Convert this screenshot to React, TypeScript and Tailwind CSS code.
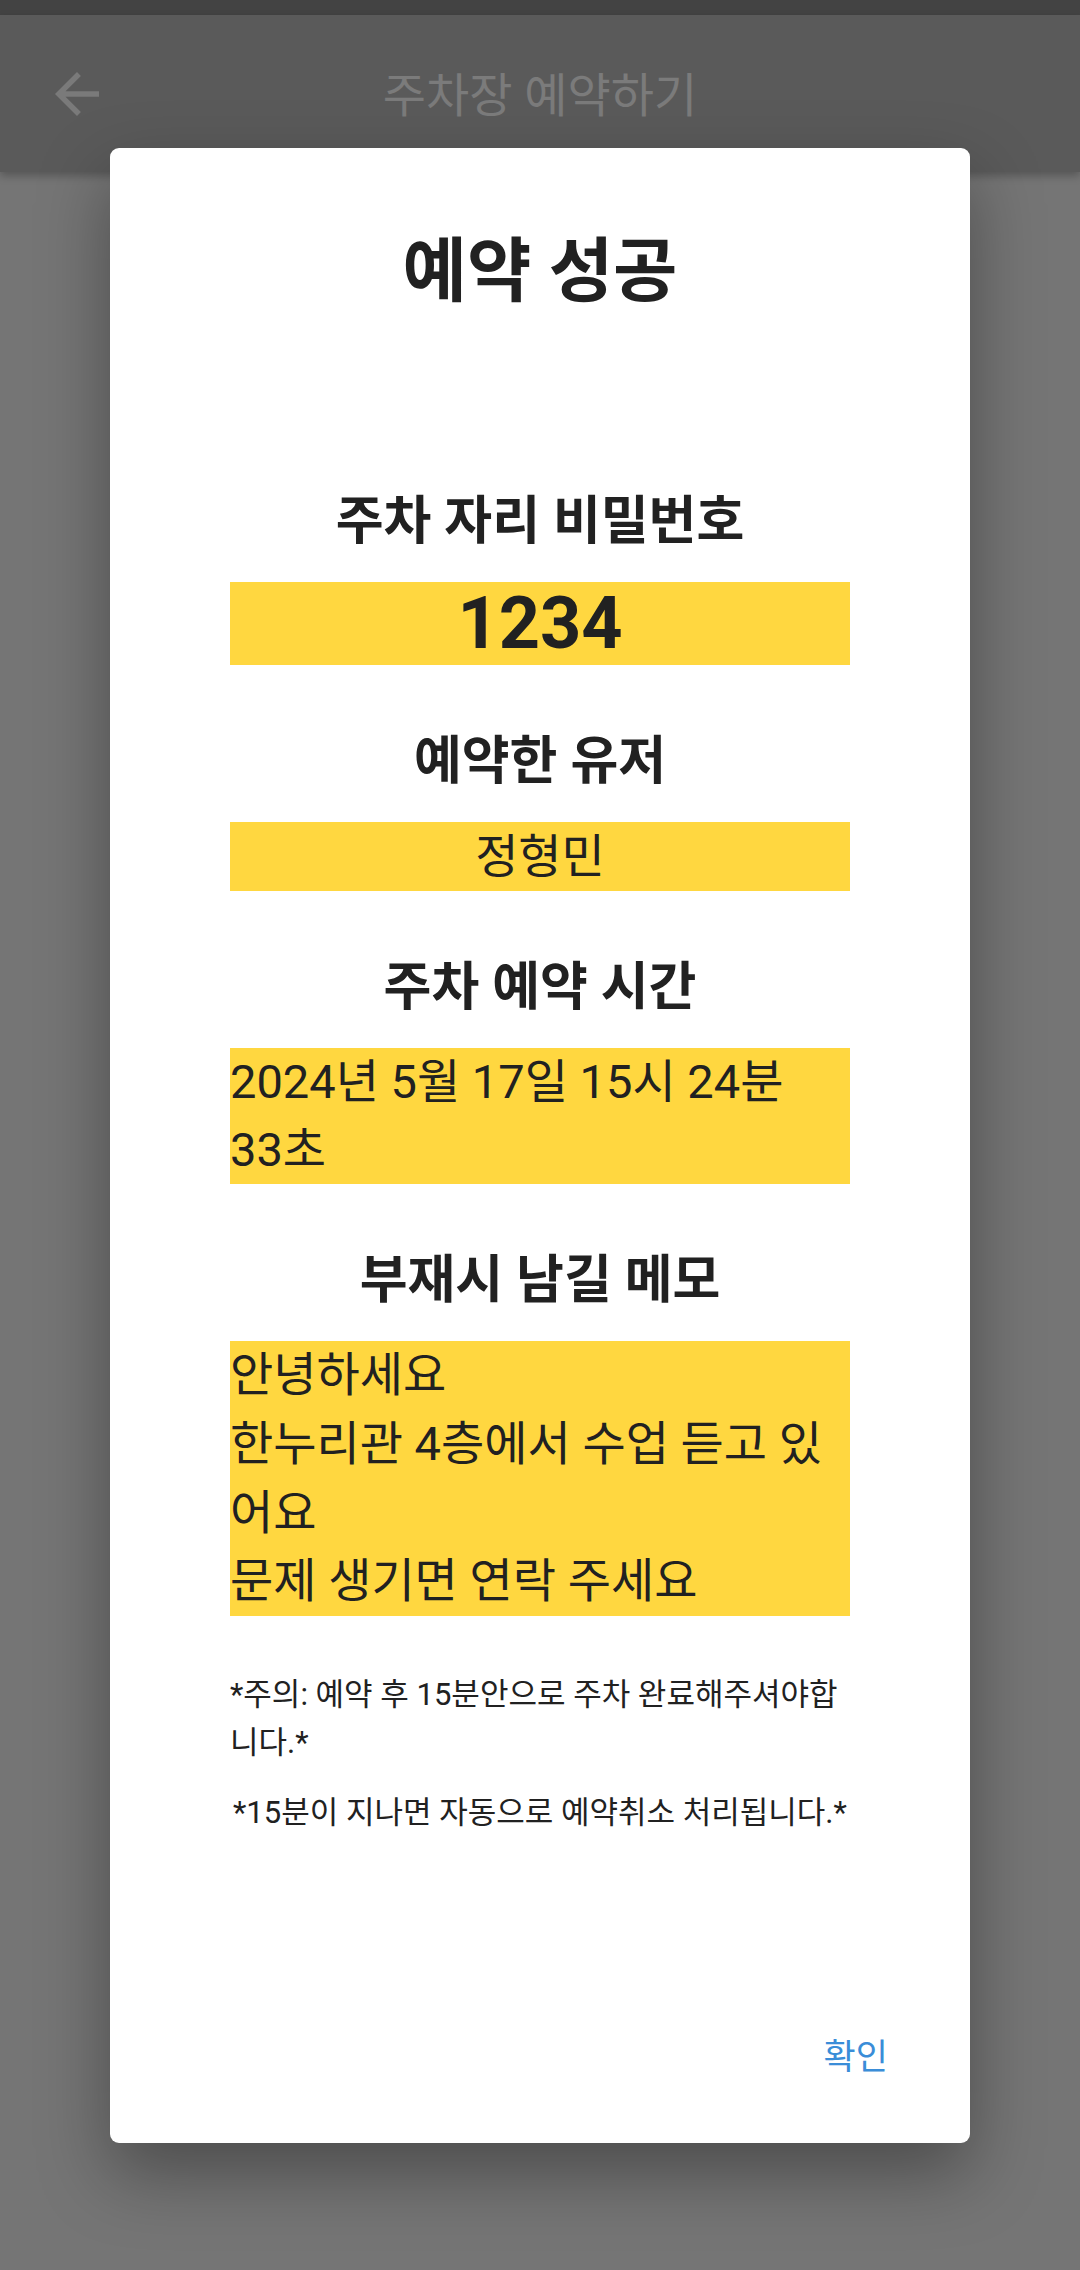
import React from "react";

const FONT = "font-[family-name:Roboto,'Noto_Sans_CJK_KR',sans-serif]";

function Heading({ children, mt }: { children: React.ReactNode; mt: string }) {
  return (
    <div className={`${mt} text-center text-[52px] leading-[76px] font-bold text-[#212121]`}>
      {children}
    </div>
  );
}

export default function App() {
  return (
    <div className={`relative w-[1080px] h-[2270px] overflow-hidden bg-[#757575] ${FONT}`}>
      <div className="h-[15px] bg-[#434343]" />
      <div className="relative h-[157px] bg-[#5a5a5a] flex items-center justify-center shadow-[0_4px_8px_rgba(0,0,0,0.25)]">
        <svg
          className="absolute left-[44px] top-1/2 -translate-y-1/2"
          width="66"
          height="66"
          viewBox="0 0 24 24"
          fill="#7a7a7a"
        >
          <path d="M20 11H7.83l5.59-5.59L12 4l-8 8 8 8 1.41-1.41L7.83 13H20v-2z" />
        </svg>
        <div className="text-[47px] leading-[60px] text-[#7b7b7b] mt-[4px]">주차장 예약하기</div>
      </div>

      <div className="absolute left-[110px] top-[148px] w-[860px] h-[1995px] bg-white rounded-[9px] shadow-[0_30px_70px_rgba(0,0,0,0.35)] flex flex-col">
        <div className="px-[120px] pt-[74px] flex flex-col">
          <div className="text-center text-[70px] leading-[100px] font-bold text-[#212121]">예약 성공</div>

          <Heading mt="mt-[162px]">주차 자리 비밀번호</Heading>
          <div className="mt-[22px] h-[83px] bg-[#ffd740] flex items-center justify-center text-[72px] font-bold text-[#212121] leading-none">
            1234
          </div>

          <Heading mt="mt-[59px]">예약한 유저</Heading>
          <div className="mt-[22px] bg-[#ffd740] text-center text-[47px] leading-[69px] text-[#212121]">정형민</div>

          <Heading mt="mt-[59px]">주차 예약 시간</Heading>
          <div className="mt-[22px] bg-[#ffd740] text-left text-[47px] leading-[68px] text-[#212121] whitespace-nowrap">
            <div>2024년 5월 17일 15시 24분</div>
            <div>33초</div>
          </div>

          <Heading mt="mt-[59px]">부재시 남길 메모</Heading>
          <div className="mt-[22px] bg-[#ffd740] text-left text-[47px] leading-[68.75px] text-[#212121] whitespace-nowrap">
            <div>안녕하세요</div>
            <div>한누리관 4층에서 수업 듣고 있</div>
            <div>어요</div>
            <div>문제 생기면 연락 주세요</div>
          </div>

          <div className="mt-[55px] text-[31px] leading-[48px] text-[#212121] whitespace-nowrap">
            <div>*주의: 예약 후 15분안으로 주차 완료해주셔야합</div>
            <div>니다.*</div>
          </div>
          <div className="mt-[22px] text-[31px] leading-[48px] text-[#212121] pl-[3px] whitespace-nowrap">
            *15분이 지나면 자동으로 예약취소 처리됩니다.*
          </div>
        </div>

        <div className="mt-auto flex justify-end pr-[82px] pb-[60px]">
          <div className="text-[35px] leading-[50px] text-[#3a8dd8]">확인</div>
        </div>
      </div>
    </div>
  );
}
